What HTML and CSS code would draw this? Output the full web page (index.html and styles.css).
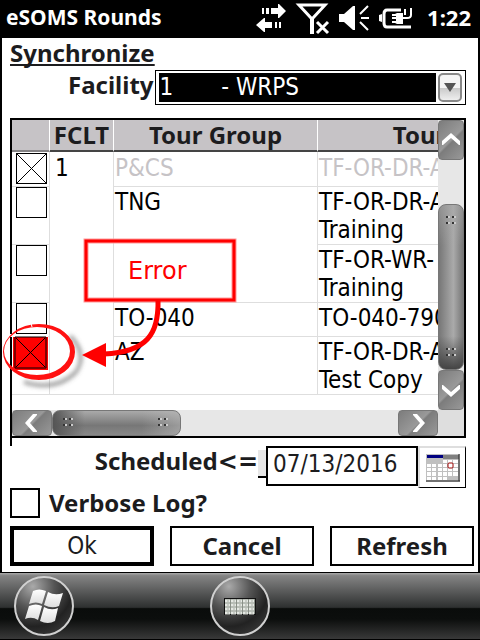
FILE: index.html
```html
<!DOCTYPE html>
<html lang="en">
<head>
<meta charset="utf-8">
<title>eSOMS Rounds</title>
<link rel="stylesheet" href="styles.css">
</head>
<body>
<header class="status">
  <span class="status-title">eSOMS Rounds</span>
  <svg class="status-icons" width="160" height="38" viewBox="0 0 160 38" aria-hidden="true">
    <g fill="#fff">
      <path d="M6 8h2v6H6zM10 8h3v6h-3zM15 8h7V4h1l7 7-7 7h-1v-4h-7zM23 22h2v6h-2zM19 22h2v6h-2zM16 22H9v-4H8l-8 7 8 7h1v-4h7z"/>
      <path d="M83 14h5l9-8h2v24h-2l-9-8h-5z"/>
      <path d="M123 15l3-1v8l-3-1z"/>
      <path d="M136 14h3l2-1h6v11h-6l-2-1h-3v-2h4v-2h-4v-2h4v-1h-4z"/>
    </g>
    <g fill="none" stroke="#fff">
      <path d="M43 5h26L56 19z" stroke-width="3"/>
      <path d="M56 18v16" stroke-width="4"/>
      <path d="M61 22l11 11M72 22L61 33" stroke-width="3"/>
      <path d="M104 14l8-8M105 18h8M104 22l8 8" stroke-width="2"/>
      <path d="M145 10H131Q128 10 128 14V23Q128 27 131 27H155" stroke-width="3"/>
      <path d="M147 18h4Q155 18 155 15V8M149 9v6" stroke-width="2"/>
    </g>
  </svg>
  <span class="status-time">1:22</span>
</header>

<main class="screen">
  <h1 class="heading">Synchronize</h1>

  <div class="facility">
    <label for="facility">Facility</label>
    <div class="combo">
      <select id="facility"><option>1&nbsp;&nbsp;&nbsp;&nbsp;&nbsp;&nbsp;&nbsp;- WRPS</option></select>
      <span class="combo-arrow"></span>
    </div>
  </div>

  <section class="tours">
    <div class="tours-box">
      <div class="tours-view">
        <table>
          <colgroup><col class="col-check"><col class="col-fclt"><col class="col-group"><col class="col-tour"></colgroup>
          <thead>
            <tr><th></th><th>FCLT</th><th>Tour Group</th><th>Tour Name</th></tr>
          </thead>
          <tbody>
            <tr class="short off">
              <td><input type="checkbox" checked aria-label="P&amp;CS"></td>
              <td rowspan="5" class="fclt">1</td>
              <td>P&amp;CS</td><td>TF-OR-DR-A</td>
            </tr>
            <tr>
              <td><input type="checkbox" aria-label="TNG, TF-OR-DR"></td>
              <td rowspan="2">TNG</td><td>TF-OR-DR-A<br>Training</td>
            </tr>
            <tr>
              <td><input type="checkbox" aria-label="TNG, TF-OR-WR"></td>
              <td>TF-OR-WR-<br>Training</td>
            </tr>
            <tr class="short">
              <td><input type="checkbox" aria-label="TO-040"></td>
              <td>TO-040</td><td>TO-040-790</td>
            </tr>
            <tr>
              <td><input type="checkbox" class="failed" checked aria-label="AZ"></td>
              <td>AZ</td><td>TF-OR-DR-A<br>Test Copy</td>
            </tr>
          </tbody>
        </table>
      </div>
      <div class="bar bar-v">
        <button type="button" class="step" aria-label="Scroll up"><svg width="20" height="16" viewBox="0 0 20 16"><path d="M1 13v-4l9-8 9 8v4h-1l-8-7-8 7z"/></svg></button>
        <div class="gap-v"></div>
        <div class="thumb thumb-v"><i class="grip"></i><i class="grip"></i></div>
        <button type="button" class="step" aria-label="Scroll down"><svg width="20" height="16" viewBox="0 0 20 16"><path d="M1 3v4l9 8 9-8V3h-1l-8 7-8-7z"/></svg></button>
      </div>
      <div class="bar bar-h">
        <button type="button" class="step" aria-label="Scroll left"><svg width="16" height="20" viewBox="0 0 16 20"><path d="M13 1H9L1 10l8 9h4v-1l-7-8 7-8z"/></svg></button>
        <div class="thumb thumb-h"><i class="grip"></i><i class="grip"></i></div>
        <div class="gap-h"></div>
        <button type="button" class="step" aria-label="Scroll right"><svg width="16" height="20" viewBox="0 0 16 20"><path d="M3 1h4l8 9-8 9H3v-1l7-8-7-8z"/></svg></button>
      </div>
      <div class="corner"></div>
    </div>

    <svg class="marks" width="260" height="290" viewBox="0 0 260 290" aria-hidden="true">
      <defs><filter id="soft" x="-20%" y="-20%" width="140%" height="140%"><feGaussianBlur stdDeviation="2"/></filter></defs>
      <path d="M66 222Q84 240 72 258Q52 278 20 268" transform="translate(4 4)" fill="none" stroke="#666" stroke-opacity=".6" stroke-width="4" filter="url(#soft)"/>
      <rect x="86" y="131" width="148" height="59" fill="none" stroke="#f99" stroke-width="5"/>
      <rect x="86" y="131" width="148" height="59" fill="none" stroke="red" stroke-width="3"/>
      <path d="M158 190C159 224 147 242 104 244" fill="none" stroke="red" stroke-width="5"/>
      <path d="M82 245l24-12v24z" fill="red"/>
      <path fill="#fff" d="M10 224h38v3H10z"/>
      <path fill="#f11" fill-rule="evenodd" d="M3 242a36 28 0 1 1 72 0a36 28 0 1 1-72 0zM4 241a33 24 0 1 0 66 0a33 24 0 1 0-66 0z"/>
      <path d="M31 213l1 4" stroke="#fff"/>
      <path d="M16 228l29 29M45 228l-29 29" stroke="#000" stroke-width="1"/>
      <path d="M15 227h31v31H15z" fill="none" stroke="#000"/>
    </svg>
    <span class="marks-text">Error</span>
  </section>

  <div class="schedule">
    <label for="until">Scheduled<span class="sign">&lt;=</span></label>
    <span class="stub"></span>
    <input id="until" type="text" value="07/13/2016">
    <button type="button" class="calendar" aria-label="Pick a date">
      <svg width="34" height="28" viewBox="0 0 34 28">
        <path fill="#c0c0c0" d="M0 0h34v28H0z"/>
        <path fill="#000080" d="M1 1h16v3H1z"/><path fill="#808080" d="M17 1h16v4H17z"/>
        <path fill="#fff" d="M17 6h4v3h-4zM22 6h4v3h-4zM27 6h5v3h-5zM1 10h4v3H1zM6 10h4v3H6zM12 10h4v3h-4zM17 10h4v3h-4zM22 10h4v3h-4zM27 10h5v3h-5zM1 14h4v3H1zM6 14h4v3H6zM12 14h4v3h-4zM17 14h4v3h-4zM22 14h4v3h-4zM27 14h5v3h-5zM1 18h4v4H1zM6 18h4v4H6zM12 18h4v4h-4zM17 18h4v4h-4zM22 18h4v4h-4zM27 18h5v4h-5zM1 23h4v3H1zM6 23h4v3H6zM12 23h4v3h-4zM17 23h4v3h-4z"/>
        <rect x="22" y="9" width="5" height="5" rx="1" fill="#fff" stroke="#900"/>
        <path fill="none" stroke="#222" d="M33 0v27M0 27h34"/>
      </svg>
    </button>
  </div>

  <div class="verbose">
    <input type="checkbox" id="verbose"><label for="verbose">Verbose Log?</label>
  </div>

  <div class="actions">
    <button type="button" class="primary">Ok</button>
    <button type="button">Cancel</button>
    <button type="button">Refresh</button>
  </div>
</main>

<footer class="taskbar">
  <button type="button" class="round" aria-label="Start">
    <svg width="40" height="36" viewBox="0 0 40 36">
      <defs><linearGradient id="pane" x2="0" y2="1"><stop offset="0" stop-color="#fff"/><stop offset="1" stop-color="#ddd"/></linearGradient></defs>
      <g fill="url(#pane)">
        <path d="M9 3Q15 0 22 3L18 16Q12 13 5 16z"/>
        <path d="M24 4Q31 8 39 5L35 18Q28 21 20 17z"/>
        <path d="M5 18Q12 15 18 18L14 32Q8 28 1 31z"/>
        <path d="M20 19Q27 23 34 20L31 33Q24 37 16 33z"/>
      </g>
    </svg>
  </button>
  <button type="button" class="round" aria-label="Keyboard">
    <svg width="32" height="17" viewBox="0 0 32 17">
      <path fill="#111" d="M0 0h32v17H0z"/>
      <path fill="#8a9088" d="M1 1h30v15H1z"/>
      <path stroke="#e6e9e4" stroke-width="3" stroke-dasharray="5 1" d="M1 3h30M1 7h30M1 11h30M1 15h30"/>
      <path stroke="#a9aea7" stroke-dasharray="2 4" d="M3 3h28M3 7h28M3 11h28M3 15h28"/>
    </svg>
  </button>
</footer>
</body>
</html>
```
FILE: styles.css
```css
* { box-sizing: border-box; }

body {
  margin: 0;
  min-height: 100vh;
  display: flex;
  flex-direction: column;
  background: #000;
  color: #1c1c1e;
  font: bold 24px/30px "Noto Sans", sans-serif;
}

button, input, select {
  margin: 0;
  padding: 0;
  border: 0;
  border-radius: 0;
  appearance: none;
  color: inherit;
  font: inherit;
}

svg { display: block; }

.status {
  display: flex;
  align-items: center;
  height: 38px;
  padding: 0 9px 4px 6px;
  color: #fff;
  font-size: 21px;
}
.status-title { flex: 1; }
.status-icons { margin-top: 4px; }
.status-time { width: 55px; text-align: right; font-size: 22px; }

.screen {
  flex: 1;
  margin: 0 2px 1px;
  padding: 0 4px 5px 8px;
  background: #fff;
}

.heading {
  margin: 0;
  font: inherit;
  text-decoration: underline;
  text-decoration-thickness: 2px;
  text-underline-offset: 2px;
  text-decoration-skip-ink: none;
}

.facility {
  display: flex;
  margin: 2px 8px 13px 58px;
}
.combo {
  flex: 1;
  display: flex;
  gap: 2px;
  height: 35px;
  margin-left: 1px;
  padding: 2px 3px;
  border: 1px solid #000;
}
.combo select {
  flex: 1;
  min-width: 0;
  padding-left: 1px;
  background: #000;
  color: #fff;
  font: 24px/29px "DejaVu Sans Condensed", "DejaVu Sans", sans-serif;
}
.combo-arrow {
  display: grid;
  place-items: center;
  width: 24px;
  border: 2px solid #888;
  border-radius: 5px;
  background: linear-gradient(#f4f4f4 50%, #c8c8c8 50%, #eee);
}
.combo-arrow::before {
  content: "";
  border: 6px solid transparent;
  border-top: 9px solid #555;
  border-bottom: 0;
}

.tours {
  position: relative;
  margin-right: 8px;
  padding-bottom: 8px;
  border-left: 2px solid #000;
}
.tours-box {
  display: grid;
  grid-template: 290px 26px / minmax(0, 1fr) 26px;
  border: 2px solid #000;
  border-left: 0;
}
.tours-view { overflow: hidden; }

table {
  width: 588px;
  table-layout: fixed;
  border-collapse: separate;
  border-spacing: 0;
  color: #000;
  font: 24px/28px "DejaVu Sans Condensed", "DejaVu Sans", sans-serif;
}
.col-check { width: 38px; }
.col-fclt { width: 64px; }
.col-group { width: 204px; }
.col-tour { width: 282px; }

th {
  height: 32px;
  padding: 0;
  border-right: 1px solid #fff;
  border-bottom: 2px solid #444;
  background: #c6c3c6;
  color: #1c1c1e;
  font: bold 24px/30px "Noto Sans", sans-serif;
}
th:first-child { border-bottom-color: #848284; }
td {
  height: 58px;
  padding: 1px 0 0 1px;
  border-right: 1px solid #dedede;
  border-bottom: 1px solid #dedede;
  vertical-align: top;
  white-space: nowrap;
}
tbody tr:first-child td { padding-top: 2px; }
.short td { height: 34px; }
.off td { height: 35px; color: #c6c3c6; }
td:first-child { padding: 0 0 0 4px; }
tbody tr:first-child td:first-child { padding-top: 1px; }
.off td.fclt { padding-left: 5px; color: #000; }

input[type="checkbox"] {
  display: block;
  width: 31px;
  height: 31px;
  border: 1px solid #000;
  background-color: #fff;
}
td input:checked {
  background-image:
    linear-gradient(to top right, transparent 49%, #000 49%, #000 51%, transparent 51%),
    linear-gradient(to bottom right, transparent 49%, #000 49%, #000 51%, transparent 51%);
}
td input.failed {
  border-color: red;
  background: red;
  box-shadow: -1px 0 0 2px red;
}

.bar { display: flex; background: #e7e7e7; }
.bar-v { flex-direction: column; }
.step {
  display: grid;
  place-items: center;
  flex: 0 0 40px;
  border: 1px solid #777;
  border-radius: 4px;
  background: linear-gradient(135deg, #7c7c7c, #999 50%, #7c7c7c 55%, #999);
}
.step path { fill: #fff; }
.gap-v { flex: 0 0 44px; }
.gap-h { flex: 1; }
.thumb {
  display: flex;
  justify-content: space-between;
  align-items: center;
  border: 1px solid #777;
  border-radius: 8px;
}
.thumb-v {
  flex: 1;
  flex-direction: column;
  padding: 11px 0;
  background: linear-gradient(#aaa8, #8880 25%, #8880 80%, #444), linear-gradient(90deg, #777, #aaa 60%, #777);
}
.thumb-h {
  flex: 0 0 129px;
  padding: 0 12px 0 10px;
  background: linear-gradient(90deg, #555, #8880 25%, #8880 70%, #bbb8), linear-gradient(#aaa, #777 60%, #888);
}
.grip {
  width: 10px;
  height: 10px;
  background:
    linear-gradient(#333, #333) 0 0 / 2px 2px,
    linear-gradient(#ccc, #ccc) 2px 0 / 2px 2px,
    linear-gradient(#333, #333) 6px 0 / 2px 2px,
    linear-gradient(#ccc, #ccc) 8px 0 / 2px 2px,
    linear-gradient(#333, #333) 0 6px / 2px 2px,
    linear-gradient(#ccc, #ccc) 2px 6px / 2px 2px,
    linear-gradient(#333, #333) 6px 6px / 2px 2px,
    linear-gradient(#ccc, #ccc) 8px 6px / 2px 2px;
  background-repeat: no-repeat;
}
.corner { background: #dedede; }

.marks { position: absolute; left: -12px; top: -8px; pointer-events: none; }
.marks-text {
  position: absolute;
  left: 116px;
  top: 138px;
  color: red;
  font: 24px/30px "DejaVu Sans", sans-serif;
}

.schedule {
  display: flex;
  justify-content: flex-end;
  margin-right: 8px;
}
.sign { font-family: "DejaVu Sans", sans-serif; }
.stub {
  width: 8px;
  height: 28px;
  margin: 4px 0 0;
  border-bottom: 2px solid #000;
  background: #e7e7e7;
}
.schedule input {
  width: 152px;
  height: 40px;
  padding: 0 0 4px 5px;
  border: 2px solid #000;
  background: #fff;
  font: 24px/30px "DejaVu Sans Condensed", "DejaVu Sans", sans-serif;
}
.calendar {
  display: grid;
  place-items: center;
  width: 48px;
  height: 42px;
  border: 2px solid #dedede;
  border-right: 1px solid #000;
  border-bottom: 1px solid #000;
  background: #fff;
}

.verbose { display: flex; gap: 9px; }
.verbose input[type="checkbox"] { width: 30px; height: 30px; border-width: 2px; }

.actions {
  display: grid;
  grid-template-columns: repeat(3, 1fr);
  gap: 16px;
  margin-top: 8px;
}
.actions button {
  height: 40px;
  border: 2px solid #000;
  background: #fff;
}
.actions .primary {
  border-width: 4px;
  font: 24px/30px "DejaVu Sans Condensed", "DejaVu Sans", sans-serif;
}

.taskbar {
  display: grid;
  grid-template-columns: 1fr 60px 1fr;
  align-items: center;
  height: 67px;
  padding: 0 14px;
  border-bottom: 1px solid #000;
  background: linear-gradient(#aaa, #848484 4%, #2e3030 52%, #0a0c0b 54%, #0c0e0d 70%, #393939);
}
.round {
  display: grid;
  place-items: center;
  width: 60px;
  height: 60px;
  border: 2px solid #d0d0d0;
  border-radius: 50%;
  background: radial-gradient(circle at 30% 15%, #aaa, #555 35%, #222 65%, #444);
}
```
